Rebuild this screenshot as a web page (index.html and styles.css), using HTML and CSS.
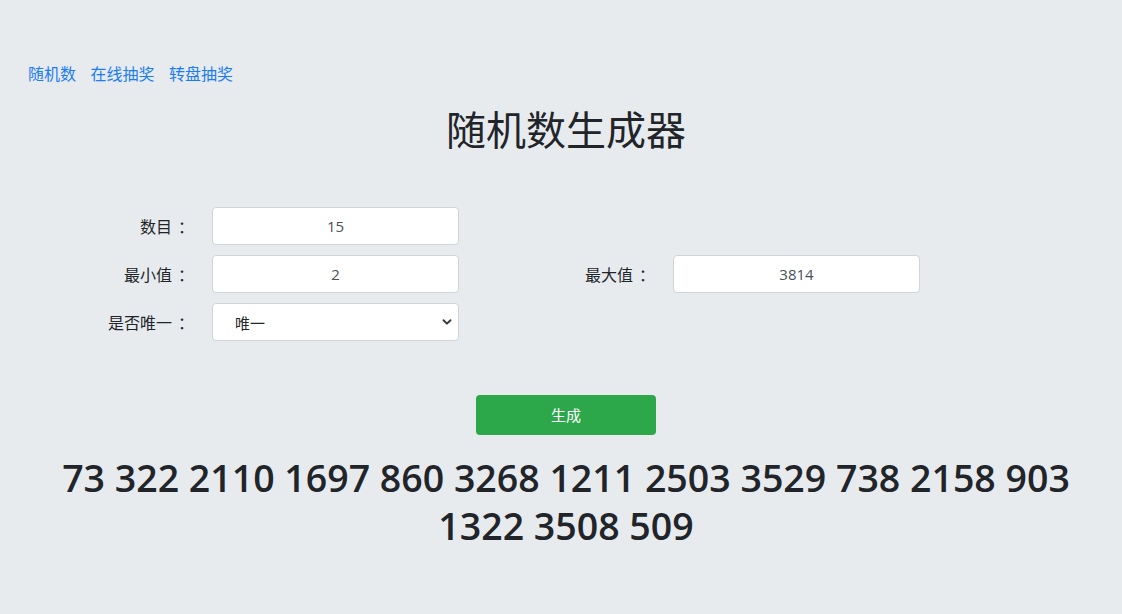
FILE: index.html
```html
<!DOCTYPE html>
<html lang="zh-CN">
<head>
<meta charset="utf-8">
<title>随机数生成器</title>
<link rel="stylesheet" href="styles.css">
</head>
<body>
<div class="page">
  <nav class="nav">
    <a href="#">随机数</a>
    <a href="#">在线抽奖</a>
    <a href="#">转盘抽奖</a>
  </nav>
  <h1 class="title">随机数生成器</h1>
  <form class="form">
    <label class="label">数目<span class="colon">：</span></label>
    <input class="field" type="text" value="15">
    <span></span><span></span>
    <label class="label">最小值<span class="colon">：</span></label>
    <input class="field" type="text" value="2">
    <label class="label">最大值<span class="colon">：</span></label>
    <input class="field" type="text" value="3814">
    <label class="label">是否唯一<span class="colon">：</span></label>
    <div class="select">
      <span>唯一</span>
      <svg class="chev" width="10" height="8" viewBox="0 0 10 8"><path d="M1.5 2.2 5 5.6 8.5 2.2" fill="none" stroke="#343a40" stroke-width="2" stroke-linecap="round" stroke-linejoin="round"/></svg>
    </div>
  </form>
  <div class="actions">
    <button class="btn" type="button">生成</button>
  </div>
  <div class="result">73 322 2110 1697 860 3268 1211 2503 3529 738 2158 903 1322 3508 509</div>
</div>
</body>
</html>
```
FILE: styles.css
```css
* { box-sizing: border-box; }
html, body { margin: 0; padding: 0; }
body {
  background: #e8ebee;
  color: #212529;
  font-family: "Open Sans", "Noto Sans CJK SC", sans-serif;
  font-size: 16px;
  height: 614px;
  overflow: hidden;
}
.page { padding: 61px 0 0 10px; }
.nav {
  display: flex;
  gap: 14.5px;
  padding-left: 18px;
  line-height: 24px;
  font-family: "Noto Sans CJK SC", sans-serif;
  font-size: 16px;
}
.nav a { color: #1a7cf7; text-decoration: none; }
.title {
  margin: 19px 0 0;
  text-align: center;
  font-family: "Noto Sans CJK SC", sans-serif;
  font-weight: 400;
  font-size: 40px;
  line-height: 48px;
  color: #212529;
}
.form {
  margin-top: 55px;
  display: grid;
  grid-template-columns: 202px 247px 214px 247px;
  row-gap: 10px;
  align-items: center;
}
.label {
  text-align: right;
  padding-right: 18px;
  font-family: "Noto Sans CJK SC", sans-serif;
  font-size: 16px;
  color: #212529;
}
.colon { font-family: "Noto Sans CJK TC", sans-serif; margin-left: 6px; }
.field, .select {
  height: 38px;
  width: 247px;
  border: 1px solid #ced4da;
  border-radius: 4px;
  background: #fff;
  font-family: "Open Sans", "Noto Sans CJK SC", sans-serif;
  font-size: 15px;
  color: #495057;
}
.field { text-align: center; padding: 0 12px; }
.select {
  display: flex;
  align-items: center;
  justify-content: space-between;
  padding: 0 6px 0 22px;
  font-family: "Noto Sans CJK SC", sans-serif;
  font-size: 15px;
  color: #212529;
}
.actions {
  margin-top: 54px;
  display: flex;
  justify-content: center;
}
.btn {
  width: 180px;
  height: 40px;
  border: none;
  border-radius: 4px;
  background: #2ca84a;
  color: #fff;
  font-family: "Noto Sans CJK SC", sans-serif;
  font-size: 15px;
  padding-bottom: 2px;
  cursor: pointer;
}
.result {
  margin-top: 19px;
  text-align: center;
  font-family: "Open Sans", sans-serif;
  font-weight: 600;
  font-size: 37.5px;
  line-height: 48px;
  color: #212529;
  padding: 0 40px;
}
```
